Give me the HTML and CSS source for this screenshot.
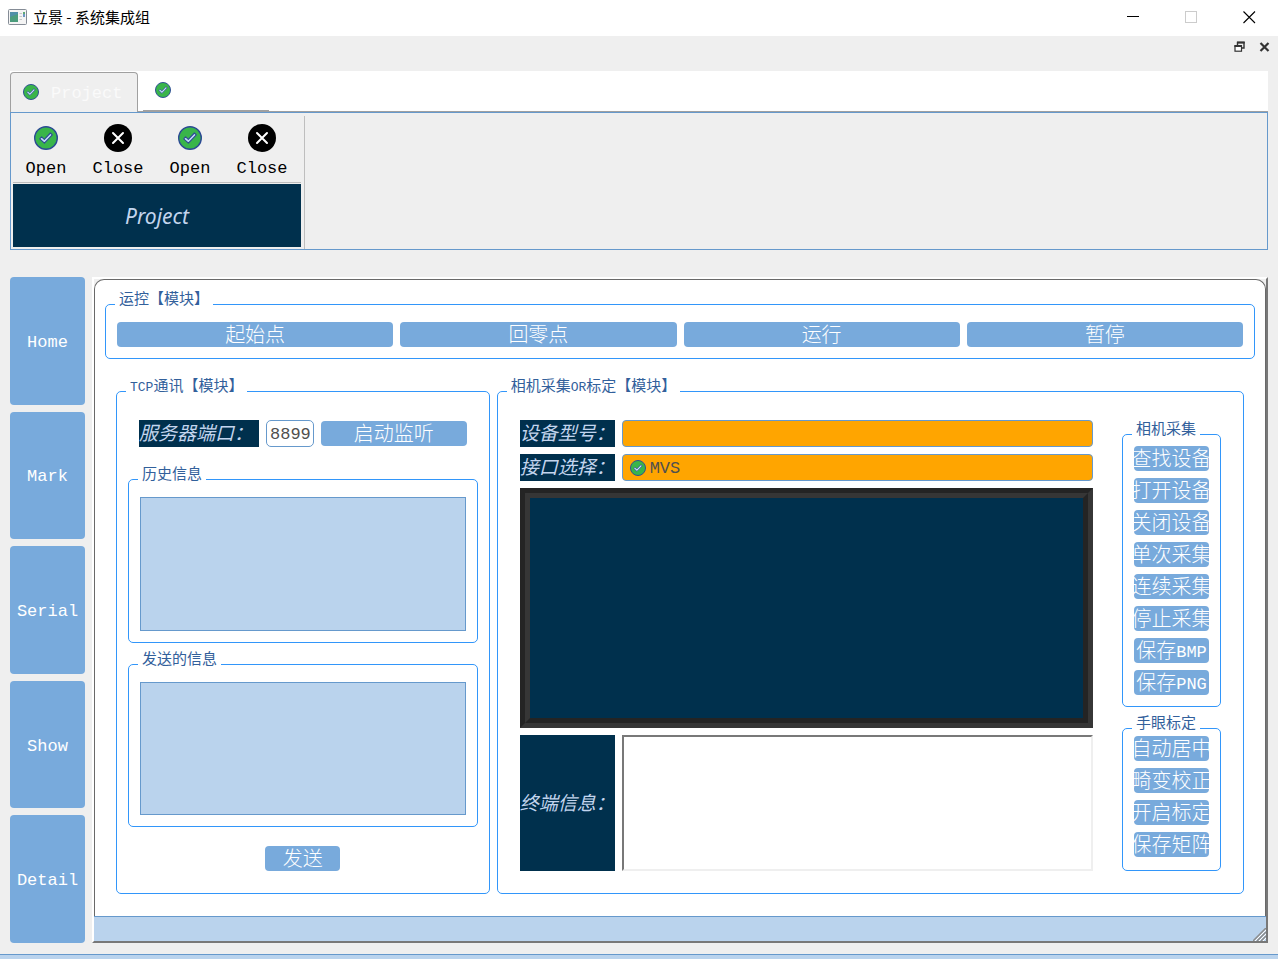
FILE: index.html
```html
<!DOCTYPE html>
<html lang="zh-CN">
<head>
<meta charset="utf-8">
<title>立景 - 系统集成组</title>
<link rel="stylesheet" href="styles.css">
</head>
<body>
<svg class="defs" aria-hidden="true">
  <symbol id="ok" viewBox="0 0 24 24">
    <circle cx="12" cy="12" r="11.3" fill="#39b54a" stroke="#2b4a94" stroke-width="1.4"/>
    <path d="M5.7 12.8 7.6 10.9 10.3 13.4 16.4 7 18.3 8.9 10.4 17.1Z" fill="#c4dcfa" stroke="#2b4a94" stroke-width="1.1" stroke-linejoin="round"/>
  </symbol>
  <symbol id="no" viewBox="0 0 28 28">
    <circle cx="14" cy="14" r="14" fill="#000"/>
    <path d="M9 9 19 19M19 9 9 19" stroke="#fff" stroke-width="2" stroke-linecap="round"/>
  </symbol>
</svg>

<header class="titlebar">
  <svg class="app-icon" viewBox="0 0 19 16">
    <rect x=".5" y=".5" width="18" height="15" rx="1" fill="#f4f4f4" stroke="#858c96"/>
    <rect x="2" y="3" width="8" height="10" fill="#4f8fa8"/>
    <path d="M2 8 10 5V13H2Z" fill="#4b9c7c"/>
    <path d="M11.500 4.500H14M11.500 7.500H14M11.500 10.500H14" stroke="#c8c8c8"/>
    <path d="M16 3V8" stroke="#3f77b5" stroke-width="1.500"/>
    <path d="M16 3V5" stroke="#5aaf5a" stroke-width="1.500"/>
  </svg>
  <h1>立景 - 系统集成组</h1>
  <div class="win-buttons">
    <button aria-label="最小化"><svg viewBox="0 0 13 13"><path d="M0 5.500H12" stroke="#000"/></svg></button>
    <button aria-label="最大化" disabled><svg viewBox="0 0 13 13"><rect x=".5" y=".5" width="11" height="11" fill="none" stroke="#ccc"/></svg></button>
    <button aria-label="关闭"><svg viewBox="0 0 13 13"><path d="M.5 .5 12 12M12 .5 .5 12" stroke="#000" stroke-width="1.100"/></svg></button>
  </div>
</header>

<div class="subbar">
  <button aria-label="还原"><svg viewBox="0 0 11 11"><path d="M3.500 4V1.500H10V7H7.500" fill="none" stroke="#333" stroke-width="1.400"/><path d="M3 1.500H10.700" stroke="#333" stroke-width="2"/><rect x="1" y="5" width="6.500" height="5.200" fill="#fff" stroke="#333" stroke-width="1.200"/><path d="M.4 5H8" stroke="#333" stroke-width="2"/></svg></button>
  <button aria-label="关闭子窗口"><svg viewBox="0 0 11 11"><path d="M1.500 2 9.500 10M9.500 2 1.500 10" stroke="#333" stroke-width="2.200"/></svg></button>
</div>

<div class="ribbon">
  <div class="tabs" role="tablist">
    <button class="tab active" role="tab" aria-selected="true"><svg><use href="#ok"/></svg><span>Project</span></button>
    <button class="tab" role="tab" aria-selected="false" aria-label="Project 2"><svg><use href="#ok"/></svg></button>
  </div>
  <div class="panel">
    <section class="tools">
      <div class="tool-row">
        <button><svg class="ok"><use href="#ok"/></svg>Open</button>
        <button><svg><use href="#no"/></svg>Close</button>
        <button><svg class="ok"><use href="#ok"/></svg>Open</button>
        <button><svg><use href="#no"/></svg>Close</button>
      </div>
      <h2 class="caption">Project</h2>
    </section>
  </div>
</div>

<div class="workspace">
  <nav class="side">
    <button>Home</button>
    <button>Mark</button>
    <button>Serial</button>
    <button>Show</button>
    <button>Detail</button>
  </nav>

  <main class="window">
    <div class="frame">
      <fieldset class="motion">
        <legend>运控【模块】</legend>
        <button class="btn">起始点</button>
        <button class="btn">回零点</button>
        <button class="btn">运行</button>
        <button class="btn">暂停</button>
      </fieldset>

      <div class="modules">
        <fieldset class="tcp">
          <legend><span class="latin">TCP</span>通讯【模块】</legend>
          <div class="port-row">
            <label class="tag" for="port">服务器端口：</label>
            <input id="port" type="text" value="8899">
            <button class="btn">启动监听</button>
          </div>
          <fieldset class="log">
            <legend>历史信息</legend>
            <textarea aria-label="历史信息"></textarea>
          </fieldset>
          <fieldset class="log">
            <legend>发送的信息</legend>
            <textarea aria-label="发送的信息"></textarea>
          </fieldset>
          <button class="btn send">发送</button>
        </fieldset>

        <fieldset class="camera">
          <legend>相机采集<span class="latin">OR</span>标定【模块】</legend>
          <div class="camera-main">
            <label class="tag" for="model">设备型号：</label>
            <div class="combo"><select id="model"><option></option></select></div>
            <label class="tag" for="api">接口选择：</label>
            <div class="combo"><svg><use href="#ok"/></svg><select id="api"><option>MVS</option></select></div>
            <div class="view"><div class="view-inner"></div></div>
            <label class="tag" for="term">终端信息：</label>
            <textarea id="term" class="terminal"></textarea>
          </div>
          <div class="camera-side">
            <fieldset class="stack grab">
              <legend>相机采集</legend>
              <button class="btn">查找设备</button>
              <button class="btn">打开设备</button>
              <button class="btn">关闭设备</button>
              <button class="btn">单次采集</button>
              <button class="btn">连续采集</button>
              <button class="btn">停止采集</button>
              <button class="btn">保存<span class="latin">BMP</span></button>
              <button class="btn">保存<span class="latin">PNG</span></button>
            </fieldset>
            <fieldset class="stack calib">
              <legend>手眼标定</legend>
              <button class="btn">自动居中</button>
              <button class="btn">畸变校正</button>
              <button class="btn">开启标定</button>
              <button class="btn">保存矩阵</button>
            </fieldset>
          </div>
        </fieldset>
      </div>
    </div>
    <footer class="status">
      <svg class="grip" viewBox="0 0 13 13"><path d="M0 13 13 0M4 13 13 4M8 13 13 8" stroke="#8c8c8c" stroke-width="1.500"/><path d="M2 13 13 2M6 13 13 6M10 13 13 10" stroke="#fff"/></svg>
    </footer>
  </main>
</div>
<footer class="app-status"></footer>
</body>
</html>
```
FILE: styles.css
```css
* { box-sizing: border-box; }

:root {
  --blue: #78aadc;
  --pale: #bad3ed;
  --edge: #6699cc;
  --line: #3296fa;
  --navy: #00304d;
  --gray: #efefef;
  --song: "Liberation Mono", "Noto Sans CJK SC", monospace;
  --hei: "Noto Sans", "Noto Sans CJK SC", sans-serif;
}

body {
  margin: 0;
  min-height: 100vh;
  display: flex;
  flex-direction: column;
  background: var(--gray);
  font-family: var(--song);
  font-size: 17px;
  color: #000;
}

button, input, select, textarea {
  font: inherit;
  color: inherit;
  margin: 0;
  padding: 0;
  border: 0;
  background: none;
  border-radius: 0;
}

h1, h2 { margin: 0; font-weight: 400; }
svg { display: block; flex: none; }
.defs { position: absolute; width: 0; height: 0; }

/* Title bar */
.titlebar {
  height: 36px;
  display: flex;
  align-items: center;
  gap: 6px;
  padding: 0 0 2px 8px;
  background: #fff;
}
.app-icon { width: 19px; height: 16px; }
.titlebar h1 { font: 15px/20px "Noto Sans CJK SC", sans-serif; }
.win-buttons { display: flex; margin-left: auto; }
.win-buttons button { width: 58px; height: 34px; display: grid; place-items: center; }
.win-buttons svg { width: 13px; height: 13px; }

.subbar {
  height: 35px;
  display: flex;
  gap: 14px;
  justify-content: flex-end;
  align-items: flex-start;
  padding: 5px 8px 0 0;
}
.subbar svg { width: 11px; height: 11px; }

/* Ribbon */
.ribbon { margin: 0 10px; }
.tabs {
  display: flex;
  align-items: flex-end;
  gap: 5px;
  height: 41px;
  background: #fff;
  border-bottom: 1px solid #a0a0a0;
}
.tab {
  width: 126px;
  height: 39px;
  display: flex;
  align-items: center;
  gap: 12px;
  padding: 0 12px 2px;
  border-bottom: 1px solid #a0a0a0;
  color: #fafafa;
}
.tab.active {
  width: 128px;
  height: 40px;
  margin-bottom: -1px;
  border: 1px solid #a0a0a0;
  border-bottom: 0;
  border-radius: 4px 4px 0 0;
  background: var(--gray);
}
.tab svg { width: 16px; height: 16px; }
.tab span { padding-top: 4px; }
.panel {
  height: 138px;
  display: flex;
  border: 1px solid var(--edge);
  padding: 3px 0 0 2px;
}
.tools {
  width: 292px;
  padding-right: 3px;
  border-right: 1px solid #bebebe;
  display: flex;
  flex-direction: column;
}
.tool-row {
  display: grid;
  grid-template-columns: repeat(4, 1fr);
  height: 67px;
  border-bottom: 1px solid #bebebe;
}
.tool-row button {
  display: flex;
  flex-direction: column;
  align-items: center;
  gap: 7px;
  padding: 8px 6px 0 0;
  line-height: 20px;
}
.tool-row svg { width: 28px; height: 28px; }
.tool-row .ok { padding: 2px; }
.caption {
  height: 63px;
  margin-top: 1px;
  display: grid;
  place-items: center;
  background: var(--navy);
  color: #c3d5ee;
  font: italic 21px/24px var(--hei);
}

/* Workspace */
.workspace {
  flex: 1;
  display: flex;
  gap: 7px;
  margin: 27px 10px 11px;
}
.side {
  width: 75px;
  display: flex;
  flex-direction: column;
  gap: 7px;
}
.side button {
  flex: 1;
  padding-top: 3px;
  background: var(--blue);
  border-radius: 4px;
  color: #fff;
}
.window {
  flex: 1;
  min-width: 0;
  display: flex;
  flex-direction: column;
  border: 2px solid;
  border-color: #fff #787878 #787878 #fff;
}
.frame {
  flex: 1;
  display: flex;
  flex-direction: column;
  gap: 30px;
  padding: 22px 10px;
  background: #fff;
  border: 1px solid #696969;
  border-width: 1px 1px 0;
  border-radius: 10px 10px 0 0;
}
.status {
  height: 25px;
  display: flex;
  justify-content: flex-end;
  align-items: flex-end;
  background: var(--pale);
  border-top: 1px solid var(--edge);
}
.grip { width: 13px; height: 13px; }
.app-status {
  height: 5px;
  background: var(--pale);
  border-top: 1px solid var(--edge);
}

/* Group boxes: the title sits a little above the border line */
fieldset {
  min-width: 0;
  margin: 0;
  padding: 0;
  border: 1px solid var(--line);
  border-radius: 5px;
}
legend {
  display: flex;
  align-items: flex-end;
  height: 5px;
  margin-left: -2px;
  padding: 0 4px;
  font-size: 15px;
  line-height: 12px;
  color: #32609b;
  white-space: nowrap;
}
legend .latin { font-size: 13px; }

.btn {
  display: flex;
  align-items: center;
  justify-content: center;
  height: 25px;
  padding-top: 4px;
  overflow: hidden;
  white-space: nowrap;
  background: var(--blue);
  border-radius: 4px;
  color: #fff;
  font-size: 20px;
  font-weight: 300;
  line-height: 25px;
}
.btn .latin { font-size: 17px; }

.tag {
  display: flex;
  align-items: center;
  background: var(--navy);
  color: #c3d5ee;
  font: italic 19px/27px var(--hei);
  white-space: nowrap;
  overflow: hidden;
}

.motion {
  display: grid;
  grid-template-columns: repeat(4, 1fr);
  gap: 7px;
  padding: 15px 11px 11px;
}

.modules {
  flex: 1;
  display: grid;
  grid-template-columns: 1fr 2fr;
  gap: 7px;
  padding: 0 11px;
}
.tcp {
  display: flex;
  flex-direction: column;
  padding: 26px 11px 22px;
}
.port-row {
  display: grid;
  grid-template-columns: 120px 48px 1fr;
  gap: 7px;
  align-items: center;
  padding: 0 11px;
  margin-bottom: 30px;
}
.port-row input {
  width: 100%;
  height: 27px;
  padding: 2px 3px 0;
  border: 1px solid var(--edge);
  border-radius: 5px;
  color: #505050;
}
.log {
  flex: 1;
  display: flex;
  padding: 15px 11px 11px;
  margin-bottom: 19px;
}
.log textarea {
  width: 100%;
  height: 100%;
  min-height: 80px;
  resize: none;
  background: var(--pale);
  border: 1px solid var(--edge);
}
.send { width: 75px; align-self: center; }

.camera {
  display: grid;
  grid-template-columns: 1fr 99px;
  gap: 29px;
  padding: 26px 22px 22px;
}
.camera > legend { margin-left: -13px; }
.camera-main {
  display: grid;
  grid-template-columns: 95px 1fr;
  grid-template-rows: 27px 27px 1fr 136px;
  gap: 7px;
}
.combo {
  display: flex;
  align-items: center;
  gap: 4px;
  padding: 0 7px;
  background: #ffa500;
  border: 1px solid var(--edge);
  border-radius: 4px;
  color: #505050;
}
.combo svg { width: 16px; height: 16px; }
.combo select { flex: 1; appearance: none; padding-top: 2px; }
.view {
  grid-column: 1 / -1;
  min-height: 160px;
  display: flex;
  border: 5px solid;
  border-color: #242424 #363636 #363636 #242424;
}
.view-inner {
  flex: 1;
  background: var(--navy);
  border: 5px solid;
  border-color: #363636 #242424 #242424 #363636;
}
.terminal {
  width: 100%;
  height: 100%;
  resize: none;
  background: #fff;
  border: 2px solid;
  border-color: #787878 var(--gray) var(--gray) #787878;
}
.camera-side {
  display: flex;
  flex-direction: column;
  gap: 19px;
  padding-top: 12px;
}
.stack {
  display: grid;
  gap: 7px;
  align-content: start;
  padding: 0 11px;
}
.grab { flex: 1; padding-top: 9px; padding-bottom: 11px; }
.calib { padding-top: 5px; padding-bottom: 13px; }
```
